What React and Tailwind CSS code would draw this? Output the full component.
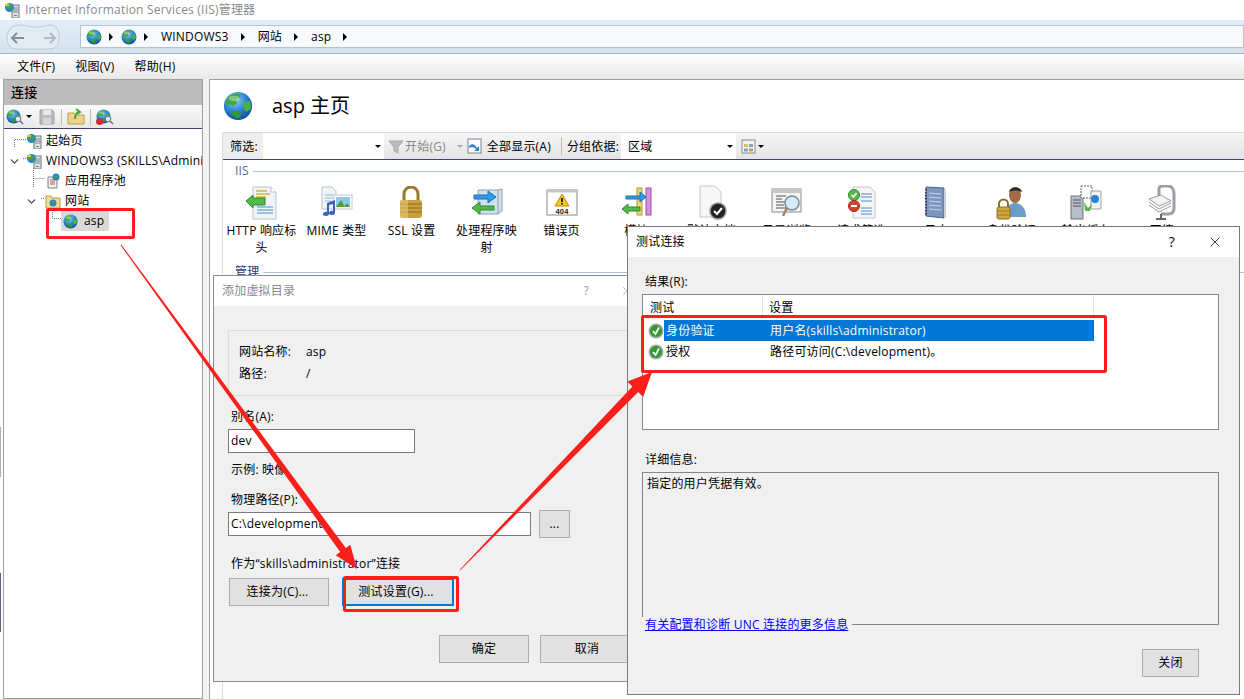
import { ChevronDown, X } from 'lucide-react'

const font = { fontFamily: '"Open Sans", "Noto Sans CJK SC", sans-serif' }

function Globe({ size = 16 }) {
  return (
    <svg width={size} height={size} viewBox="0 0 32 32" className="shrink-0">
      <defs>
        <radialGradient id="globeSea" cx="0.4" cy="0.3" r="0.8">
          <stop offset="0" stopColor="#8fd0f5" />
          <stop offset="0.5" stopColor="#2a84cf" />
          <stop offset="1" stopColor="#0c3f8e" />
        </radialGradient>
      </defs>
      <circle cx="16" cy="16" r="15" fill="url(#globeSea)" />
      <path d="M7 6c4-3 9-4 12-2l-1 4-4 1 1 4-4 3-3-2-5 1c-1-3 1-7 4-9z" fill="#3fa83a" />
      <path d="M21 13l7-3c2 3 2 7 1 10l-4 2-3-3z" fill="#4bb043" />
      <path d="M8 22l8-1 4 3-3 5c-4 0-7-3-9-7z" fill="#2f9a38" />
      <ellipse cx="12" cy="8" rx="6" ry="3" fill="#ffffff" opacity="0.35" />
    </svg>
  )
}

function Server({ size = 16 }) {
  return (
    <svg width={size} height={size} viewBox="0 0 16 16" className="shrink-0">
      <rect x="8" y="3" width="7" height="13" fill="#dfe3e8" stroke="#6b7380" />
      <path d="M9 6h5M9 8h5M9 10h5" stroke="#7a8290" />
      <path d="M10 13.500h3" stroke="#43a83c" />
      <circle cx="5.500" cy="5.500" r="4.500" fill="#2a84cf" />
      <path d="M3 3l4-1 1 3-3 2-3-1zM6 8l3-2v3z" fill="#43a83c" />
      <path d="M1 2h4v2H1z" fill="#f2c230" />
    </svg>
  )
}

function Caret({ className = '' }) {
  return <span className={`inline-block w-0 h-0 border-x-[3px] border-x-transparent border-t-[3px] border-t-black ${className}`} />
}

function CrumbArrow({ className }) {
  return <span className={`w-0 h-0 border-y-[4px] border-y-transparent border-l-[4px] border-l-black ${className}`} />
}

function Magnifier() {
  return (
    <svg width="10" height="10" viewBox="0 0 10 10" className="absolute right-[-3px] bottom-[-1px]">
      <circle cx="4" cy="4" r="2.800" fill="#dcecf6" stroke="#6a7480" />
      <path d="M6 6l3 3" stroke="#6a7480" strokeWidth="1.600" />
    </svg>
  )
}

function HttpIcon() {
  return (
    <svg width="34" height="34" viewBox="0 0 34 34">
      <path d="M8 1h18l5 5v27H8z" fill="#eef5f8" stroke="#b8c4cc" />
      <path d="M26 1v5h5" fill="#fff" stroke="#b8c4cc" />
      <path d="M11 5h11M11 8h14M11 11h10" stroke="#d8b03c" strokeWidth="1.600" />
      <path d="M12 21h16M12 24h16M12 27h16" stroke="#4a8ac8" />
      <path d="M1 15l7-6v3h12v7H8v3z" fill="#55b848" stroke="#2f8a30" />
    </svg>
  )
}

function MimeIcon() {
  return (
    <svg width="34" height="34" viewBox="0 0 34 34">
      <path d="M2 1h10l4 4v18H2z" fill="#f2f5f8" stroke="#b8c0c8" />
      <path d="M5 9h8M5 12h8M5 15h6" stroke="#8fb0d0" />
      <rect x="14" y="9" width="18" height="14" fill="#fff" stroke="#c0c8d0" />
      <rect x="16" y="11" width="14" height="10" fill="#8fc8ee" />
      <path d="M16 21l5-7 4 7zM24 21l3-4 3 4z" fill="#5a9a30" />
      <path d="M7 17l8-3v13a3 2 0 1 1-2-2v-7l-4 1v9a3 2 0 1 1-2-2z" fill="#3a62b8" />
    </svg>
  )
}

function LockIcon() {
  return (
    <svg width="30" height="34" viewBox="0 0 30 34">
      <path d="M7 15V8a7 7 0 0 1 14 0v7" fill="none" stroke="#9a7a28" strokeWidth="3" />
      <rect x="3" y="14" width="22" height="18" rx="3" fill="#c9a040" />
      <path d="M3 18h22M3 22h22M3 26h22" stroke="#8e6c1e" />
      <rect x="3" y="14" width="8" height="18" fill="#e6c878" opacity="0.6" />
    </svg>
  )
}

function HandlerIcon() {
  return (
    <svg width="34" height="34" viewBox="0 0 34 34">
      <path d="M8 4h20l4-1v22l-4 3H8z" fill="#cfe0ee" stroke="#8fa0b0" />
      <path d="M28 4v24" stroke="#8fa0b0" />
      <path d="M4 9h14V5l8 6-8 6v-4H4z" fill="#2f9ae0" stroke="#1a70b0" />
      <path d="M24 20H10v-4l-8 6 8 6v-4h14z" fill="#55b848" stroke="#2f8a30" />
    </svg>
  )
}

function ErrorIcon() {
  return (
    <svg width="32" height="28" viewBox="0 0 32 28">
      <rect x="1" y="1" width="30" height="25" fill="#fff" stroke="#8a8a8a" />
      <rect x="1" y="1" width="30" height="2.500" fill="#c8c8c8" />
      <path d="M16 5l7 12H9z" fill="#f4c820" stroke="#b8900c" />
      <path d="M16 9v4M16 14v1.500" stroke="#000" strokeWidth="1.600" />
      <text x="16" y="24.500" fontSize="7.500" textAnchor="middle" fill="#222" fontFamily="Liberation Sans, sans-serif" fontWeight="700">404</text>
    </svg>
  )
}

function ModuleIcon() {
  return (
    <svg width="34" height="34" viewBox="0 0 34 34">
      <rect x="17" y="2" width="5" height="27" fill="#f0d870" stroke="#b09a30" />
      <rect x="26" y="2" width="5" height="27" fill="#d890dc" stroke="#9a50a8" />
      <path d="M6 10h14V6l6 5-6 5v-3H6z" fill="#2f9ae0" stroke="#1a70b0" />
      <path d="M20 21H8v-3l-6 5 6 5v-3h12z" fill="#55b848" stroke="#2f8a30" />
    </svg>
  )
}

function DocCheckIcon() {
  return (
    <svg width="34" height="36" viewBox="0 0 34 36">
      <path d="M5 1h15l6 6v25H5z" fill="#f7f7f7" stroke="#c8c8c8" />
      <circle cx="23" cy="26" r="8" fill="#222" stroke="#999" strokeWidth="1.500" />
      <path d="M19 26l3 3 5-6" fill="none" stroke="#fff" strokeWidth="2" />
    </svg>
  )
}

function BrowseIcon() {
  return (
    <svg width="34" height="34" viewBox="0 0 34 34">
      <rect x="2" y="3" width="29" height="23" fill="#f4f4f4" stroke="#8a8a8a" />
      <rect x="2" y="3" width="29" height="4" fill="#c8c8c8" />
      <path d="M6 10h10M6 13h6M6 16h10M6 19h8M6 22h10" stroke="#555" />
      <circle cx="22" cy="17" r="7" fill="#d4ebf8" stroke="#7a8a98" strokeWidth="1.500" />
      <path d="M17 22l-4 8" stroke="#9a8a60" strokeWidth="2.500" />
    </svg>
  )
}

function FilterIcon() {
  return (
    <svg width="32" height="34" viewBox="0 0 32 34">
      <path d="M7 1h17l5 5v26H7z" fill="#f5f5f5" stroke="#c8c8c8" />
      <path d="M15 8h11M15 11h11M15 15h11M15 22h11M15 25h11M15 28h11" stroke="#4a8ac8" />
      <circle cx="8" cy="9" r="5.500" fill="#55b848" stroke="#2f8a30" />
      <path d="M5.500 9l2 2 3-4" stroke="#fff" fill="none" strokeWidth="1.500" />
      <circle cx="8" cy="20" r="5.500" fill="#d84030" stroke="#a02820" />
      <path d="M5 20h6" stroke="#fff" strokeWidth="2" />
    </svg>
  )
}

function LogIcon() {
  return (
    <svg width="30" height="36" viewBox="0 0 30 36">
      <path d="M4 2l18 1v30L4 31z" fill="#7c96bf" stroke="#4d6488" />
      <path d="M7 8l12 1M7 12l12 1M7 16l12 1M7 20l12 1M7 24l12 1" stroke="#c9d5e6" />
      <path d="M4 4v26" stroke="#33435c" strokeWidth="2" strokeDasharray="1.500 1.500" />
      <path d="M22 4l2 1v28h-2z" fill="#c8d0dc" />
    </svg>
  )
}

function AuthIcon() {
  return (
    <svg width="34" height="36" viewBox="0 0 34 36">
      <path d="M11 32c0-9 3-14 9-14s11 5 11 14z" fill="#6a9cc8" />
      <ellipse cx="20" cy="10" rx="6" ry="8" fill="#a06c44" />
      <path d="M14 7c1-6 12-6 13 0-4-2-9-2-13 0z" fill="#2c2a28" />
      <path d="M4 23v-4a4.500 4.500 0 0 1 9 0v4" fill="none" stroke="#8a7028" strokeWidth="2" />
      <rect x="2" y="22" width="13" height="12" rx="2" fill="#d0a840" stroke="#8a7028" />
      <path d="M2 26h13M2 30h13" stroke="#9a7a28" />
    </svg>
  )
}

function CacheIcon() {
  return (
    <svg width="34" height="36" viewBox="0 0 34 36">
      <rect x="1" y="11" width="12" height="23" fill="#b8bec6" stroke="#6b7380" />
      <path d="M3 15h8M3 18h8M3 21h8" stroke="#555" />
      <path d="M11 1h11v12H11z" fill="#fff" stroke="#666" strokeDasharray="2 1" />
      <path d="M21 6h10v18H21z" fill="#eef2f5" stroke="#9aa4ae" />
      <circle cx="25" cy="14" r="4" fill="#2a84cf" />
      <path d="M14 17l4 6 4-4-2 7h-5z" fill="#55b848" />
    </svg>
  )
}

function CompressIcon() {
  return (
    <svg width="30" height="36" viewBox="0 0 30 36">
      <path d="M12 11V4a3 3 0 0 1 3-3h6c4 0 6 4 6 8v14c0 4-2 6-6 6h-7" fill="none" stroke="#9aa0a8" strokeWidth="3" />
      <path d="M2 14l12-4 10 6-12 5z" fill="#f4f4f4" stroke="#999" />
      <path d="M2 17l10 7 12-6M2 20l10 7 12-6" fill="none" stroke="#999" />
      <path d="M14 29v5M9 34h10" stroke="#666" strokeWidth="2" />
    </svg>
  )
}

const features = [
  { label: 'HTTP 响应标头', icon: <HttpIcon /> },
  { label: 'MIME 类型', icon: <MimeIcon /> },
  { label: 'SSL 设置', icon: <LockIcon /> },
  { label: '处理程序映射', icon: <HandlerIcon /> },
  { label: '错误页', icon: <ErrorIcon /> },
  { label: '模块', icon: <ModuleIcon /> },
  { label: '默认文档', icon: <DocCheckIcon /> },
  { label: '目录浏览', icon: <BrowseIcon /> },
  { label: '请求筛选', icon: <FilterIcon /> },
  { label: '日志', icon: <LogIcon /> },
  { label: '身份验证', icon: <AuthIcon /> },
  { label: '输出缓存', icon: <CacheIcon /> },
  { label: '压缩', icon: <CompressIcon /> },
]

function TreeRow({ indent, chevron, icon, children }) {
  return (
    <div className={`flex items-center h-[20px] ${indent}`}>
      {chevron && <ChevronDown size={13} strokeWidth={2.2} className="text-[#444] mr-[2px] shrink-0" />}
      {icon}
      <span className="ml-[4px] text-black whitespace-nowrap">{children}</span>
    </div>
  )
}

function Sidebar() {
  return (
    <div className="w-[200px] ml-[3px] shrink-0 border border-[#a0a0a0] flex flex-col overflow-hidden bg-white">
      <div className="h-[25px] bg-[#bcbcbc] flex items-center pl-[7px] text-[13px] font-medium">连接</div>
      <div className="h-[24px] flex items-center pl-[2px] gap-[3px] bg-gradient-to-b from-[#fafafa] to-[#e8e8e8] border-b border-[#3d4270]">
        <span className="relative flex">
          <Globe size={15} />
          <Magnifier />
        </span>
        <Caret className="ml-[2px]" />
        <svg width="18" height="18" viewBox="0 0 18 18" className="ml-[3px]"><path d="M2 2h12l2 2v12H2z" fill="#b8bcc0" stroke="#9a9ea4" /><rect x="5" y="2" width="8" height="5" fill="#e8e8e8" /><rect x="5" y="10" width="8" height="6" fill="#d8d8d8" /></svg>
        <span className="w-px h-[16px] bg-[#c4c0a8] mx-[2px]" />
        <svg width="18" height="18" viewBox="0 0 18 18"><path d="M1 5h6l2 2h8v9H1z" fill="#f0d48a" stroke="#b89a48" /><path d="M8 11c0-4 1-6 4-7M9 1l4 3-4 2" stroke="#4aa83a" strokeWidth="2" fill="none" /></svg>
        <span className="w-px h-[16px] bg-[#c4c0a8] mx-[2px]" />
        <span className="relative flex">
          <Globe size={15} />
          <span className="absolute left-0 bottom-[-1px] w-[7px] h-[7px] rounded-full bg-[#d03030]" />
          <Magnifier />
        </span>
      </div>
      <div className="relative text-[12px] flex-1" style={font}>
        <svg width="70" height="100" className="absolute left-0 top-0" fill="none" stroke="#777" strokeDasharray="1 1">
          <path d="M10.500 18V10.500H22M19 29.500H22M29.500 39V59M29.500 49.500H41M37 69.500H41M48.500 79V89.500H58" />
        </svg>
        <div className="relative pt-[2px]">
          <TreeRow indent="pl-[22px]" icon={<Server size={16} />}>起始页</TreeRow>
          <TreeRow indent="pl-[4px]" chevron icon={<span className="ml-[3px] flex"><Server size={16} /></span>}>WINDOWS3 (SKILLS\Administrator)</TreeRow>
          <TreeRow indent="pl-[41px]" icon={<svg width="16" height="16" viewBox="0 0 16 16"><path d="M3 4h9v11H3z" fill="#eef0f2" stroke="#7a8290" /><path d="M5 7h5M5 9h5M5 11h5" stroke="#c06030" /><circle cx="11" cy="4" r="3.500" fill="#2a84cf" /><path d="M9 3l3-1 1 2-3 1z" fill="#43a83c" /></svg>}>应用程序池</TreeRow>
          <TreeRow indent="pl-[21px]" chevron icon={<span className="ml-[5px] flex"><svg width="16" height="16" viewBox="0 0 16 16"><path d="M1 3h5l1 2h8v10H1z" fill="#f3dc9a" stroke="#b89a48" /><circle cx="8" cy="10" r="3.500" fill="#2a84cf" /><path d="M6 9l3-1 1 2-3 1z" fill="#43a83c" /></svg></span>}>网站</TreeRow>
          <div className="flex items-center h-[20px] pl-[57px]">
            <div className="flex items-center h-[20px] w-[48px] pl-[2px] bg-[#d9d9d9]">
              <Globe size={15} />
              <span className="ml-[6px]">asp</span>
            </div>
          </div>
        </div>
      </div>
    </div>
  )
}

function FilterBar() {
  return (
    <div className="h-[28px] flex items-center border-t border-[#dcdcdc] border-b border-b-[#3d4270] bg-gradient-to-b from-[#f6f6f6] to-[#e4e4e4] text-[12px]">
      <span className="w-[40px] pl-[7px] pt-[2px] h-full flex items-center bg-[#eeeeee]">筛选:</span>
      <div className="w-[121px] h-full bg-white flex items-center justify-end pr-[3px]"><Caret /></div>
      <svg width="16" height="16" viewBox="0 0 16 16" className="ml-[4px]"><path d="M1 3h14L10 9v6l-4-2V9z" fill="#bcbcbc" stroke="#a8a8a8" /></svg>
      <span className="ml-[1px] mt-[2px] text-[#888]">开始(G)</span>
      <span className="ml-[11px] w-0 h-0 border-x-[3px] border-x-transparent border-t-[3px] border-t-[#aaa]" />
      <svg width="16" height="16" viewBox="0 0 16 16" className="ml-[4px]"><rect x="1" y="1" width="13" height="14" fill="#fff" stroke="#7a8290" /><path d="M2 8c3-3 6-2 8 2l2-2v5H7l2-2c-2-2-4-3-7-1z" fill="#2a84cf" /></svg>
      <span className="ml-[4px] mt-[2px]">全部显示(A)</span>
      <span className="ml-[10px] w-px h-[18px] bg-[#c4c0a8]" />
      <span className="ml-[5px] mt-[2px]">分组依据:</span>
      <div className="ml-[2px] w-[115px] h-full bg-white flex items-center justify-between pl-[7px] pr-[3px]"><span className="mt-[2px]">区域</span><Caret /></div>
      <svg width="15" height="15" viewBox="0 0 15 15" className="ml-[5px]"><rect x="1" y="1" width="13" height="13" fill="#f4f4f4" stroke="#8a8a8a" /><path d="M3 5h4v3H3z" fill="#e0c060" /><path d="M8 5h4v3H8z" fill="#80a0d0" /><path d="M3 9.500h4v3H3z" fill="#80a0d0" /><path d="M8 9.500h4v3H8z" fill="#d09060" /></svg>
      <Caret className="ml-[2px]" />
    </div>
  )
}

function GroupTitle({ children, className }) {
  return (
    <div className="flex items-center h-[16px] pl-[12px]">
      <span className={`text-[12px] ${className}`}>{children}</span>
      <span className="ml-[4px] flex-1 h-px bg-[#b4bfdc]" />
    </div>
  )
}

function MainPane() {
  return (
    <div className="flex-1 ml-[6px] border-t border-l border-[#a0a0a0] bg-white flex flex-col min-w-0">
      <div className="h-[52px] flex items-center pl-[13px] shrink-0">
        <Globe size={30} />
        <span className="ml-[19px] text-[20px] leading-[26px] tracking-normal">asp 主页</span>
      </div>
      <div className="ml-[12px] flex-1 border-l border-[#dcdcdc] flex flex-col">
        <FilterBar />
        <div className="pt-[3px]">
          <GroupTitle className="text-[#5b6a9c]">IIS</GroupTitle>
          <div className="flex pl-[1px] pt-[6px] h-[85px]">
            {features.map(f => (
              <div key={f.label} className="w-[75px] shrink-0 flex flex-col items-center text-[12px] leading-[17px] text-center">
                <div className="h-[36px] flex items-center justify-center">{f.icon}</div>
                <div className="mt-[1px] w-[71px]">{f.label}</div>
              </div>
            ))}
          </div>
          <GroupTitle className="text-[#1f3a7a]">管理</GroupTitle>
        </div>
      </div>
    </div>
  )
}

function WinButton({ children, className = '' }) {
  return <button className={`h-[28px] flex items-center justify-center bg-[#e1e1e1] border text-[12px] ${className}`}>{children}</button>
}

function AddVirtualDirDialog() {
  return (
    <div className="absolute left-[213px] top-[275px] w-[430px] h-[407px] border border-[#8c8c8c] bg-[#f0f0f0] text-[12px] leading-[16px]">
      <div className="h-[30px] bg-white flex items-center pl-[8px] pr-[8px] text-[#8a8a8a]">
        <span className="flex-1">添加虚拟目录</span>
        <span className="mr-[31px] text-[#999]">?</span>
        <X size={14} strokeWidth={1.200} className="text-[#999]" />
      </div>
      <div className="pl-[14px]">
        <div className="mt-[24px] h-[66px] border border-[#dcdcdc] pl-[10px] pt-[10px]">
          <div className="flex h-[22px] items-center"><span className="w-[67px]">网站名称:</span><span>asp</span></div>
          <div className="flex h-[22px] items-center"><span className="w-[67px]">路径:</span><span>/</span></div>
        </div>
        <div className="mt-[13px] pl-[3px]">别名(A):</div>
        <div className="mt-[4px] w-[187px] h-[24px] border border-[#7a7a7a] bg-white pl-[2px] flex items-center">dev</div>
        <div className="mt-[9px] pl-[3px]">示例: 映像</div>
        <div className="mt-[14px] pl-[3px]">物理路径(P):</div>
        <div className="mt-[2px] flex items-center h-[28px]">
          <div className="w-[303px] h-[24px] border border-[#7a7a7a] bg-white pl-[2px] flex items-center">C:\development</div>
          <WinButton className="ml-[8px] w-[31px] border-[#adadad]">...</WinButton>
        </div>
        <div className="mt-[18px] pl-[3px]">作为“skills\administrator”连接</div>
        <div className="mt-[6px] flex items-center pl-[1px]">
          <WinButton className="w-[100px] border-[#adadad] pr-[3px]">连接为(C)...</WinButton>
          <WinButton className="ml-[13px] w-[112px] border-2 border-[#0078d7] pr-[4px]">测试设置(G)...</WinButton>
        </div>
        <div className="mt-[29px] flex pl-[211px] gap-[11px]">
          <WinButton className="w-[90px] border-[#adadad]">确定</WinButton>
          <WinButton className="w-[94px] border-[#adadad]">取消</WinButton>
        </div>
      </div>
    </div>
  )
}

const testRows = [
  { name: '身份验证', value: '用户名(skills\\administrator)', selected: true },
  { name: '授权', value: '路径可访问(C:\\development)。', selected: false },
]

function CheckBadge() {
  return (
    <svg width="16" height="16" viewBox="0 0 16 16" className="shrink-0">
      <circle cx="8" cy="8" r="7.500" fill="#a8a8a8" />
      <circle cx="8" cy="8" r="6" fill="#2f9a30" />
      <path d="M5 8l2.500 3L11 4.500" fill="none" stroke="#fff" strokeWidth="1.800" />
    </svg>
  )
}

function TestDialog() {
  return (
    <div className="absolute left-[627px] top-[226px] w-[613px] h-[469px] border border-[#7a7a7a] bg-[#f0f0f0] text-[12px] leading-[16px]">
      <div className="h-[30px] bg-white flex items-center pl-[8px] pr-[16px]">
        <span className="flex-1">测试连接</span>
        <span className="mr-[32px] text-[14px]">?</span>
        <X size={16} strokeWidth={1.100} />
      </div>
      <div className="pl-[14px] pr-[20px]">
        <div className="mt-[17px] pl-[3px]">结果(R):</div>
        <div className="mt-[4px] h-[136px] border border-[#828790] bg-white">
          <div className="flex h-[24px] items-center">
            <span className="w-[120px] pl-[7px] pt-[2px] h-full flex items-center border-r border-[#e5e5e5]">测试</span>
            <span className="w-[331px] pl-[6px] pt-[2px] h-full flex items-center border-r border-[#e5e5e5]">设置</span>
          </div>
          <div className="pt-[1px]">
            {testRows.map(r => (
              <div key={r.name} className="flex items-center h-[21px] pl-[5px]">
                <CheckBadge />
                <div className={`flex items-center h-full w-[430px] ${r.selected ? 'bg-[#0078d7] text-white' : ''}`}>
                  <span className="w-[100px] pl-[2px]">{r.name}</span>
                  <span className="pl-[6px]">{r.value}</span>
                </div>
              </div>
            ))}
          </div>
        </div>
        <div className="mt-[22px] pl-[3px]">详细信息:</div>
        <div className="mt-[4px] h-[153px] border border-[#828790] pl-[4px] pt-[3px]">指定的用户凭据有效。</div>
        <div className="-mt-[8px] relative flex">
          <a className="bg-[#f0f0f0] pl-[3px] pr-[4px] text-[#0000ff] underline whitespace-nowrap">有关配置和诊断 UNC 连接的更多信息</a>
        </div>
        <div className="mt-[16px] flex justify-end pr-[20px]">
          <WinButton className="w-[57px] border-[#adadad]">关闭</WinButton>
        </div>
      </div>
    </div>
  )
}

function Annotations() {
  return (
    <svg width="1244" height="699" className="absolute left-0 top-0 pointer-events-none">
      <rect x="47.500" y="209.500" width="86" height="28" rx="1" fill="none" stroke="#fb1f1c" strokeWidth="3" />
      <rect x="344.500" y="577.500" width="113" height="33" rx="1" fill="none" stroke="#fb1f1c" strokeWidth="3" />
      <rect x="642.500" y="316.500" width="463" height="55" rx="1" fill="none" stroke="#fb1f1c" strokeWidth="3" />
      <polygon points="121.400,244.700 120.600,245.300 340.200,552 335.700,555.300 357,569 350.300,544.700 345.800,548" fill="#fb1f1c" />
      <polygon points="460,570.500 459.500,570 632.400,386.400 627.400,381.500 652,372 643.200,396.900 638.200,392" fill="#fb1f1c" />
    </svg>
  )
}

export default function App() {
  return (
    <div className="relative w-[1244px] h-[699px] overflow-hidden bg-white flex flex-col text-black tracking-[0.2px]" style={font}>
      <div className="h-[20px] flex items-center pl-[4px] text-[12px] text-[#8a8a8a] shrink-0">
        <Server size={16} />
        <span className="ml-[5px]">Internet Information Services (IIS)管理器</span>
      </div>
      <div className="h-[34px] shrink-0 flex items-center bg-gradient-to-b from-[#e4eef7] to-[#d4e2ef] border-b border-[#a8b6c4] pl-[6px]">
        <svg width="54" height="26" viewBox="0 0 54 26">
          <path d="M12 1c8 0 10 2 18 2s10-2 14-2c6 0 9 5 9 12s-3 12-9 12H10C4 25 1 20 1 14S5 1 12 1z" fill="#e2ecf5" stroke="#c2ccd6" />
          <path d="M18 14H6M11 9l-5 5 5 5" fill="none" stroke="#868f98" strokeWidth="2" />
          <path d="M38 14h11M44 9l5 5-5 5" fill="none" stroke="#b0b8c0" strokeWidth="2" />
        </svg>
        <div className="ml-[20px] flex-1 h-[23px] border border-[#b4c4d6] bg-[#f8fbfd] flex items-center pl-[5px] text-[12px]">
          <Globe size={16} />
          <CrumbArrow className="ml-[7px] mr-[8px]" />
          <Globe size={16} />
          <CrumbArrow className="ml-[7px] mr-[13px]" />
          <span>WINDOWS3</span>
          <CrumbArrow className="ml-[12px] mr-[13px]" />
          <span>网站</span>
          <CrumbArrow className="ml-[12px] mr-[13px]" />
          <span>asp</span>
          <CrumbArrow className="ml-[12px]" />
        </div>
      </div>
      <div className="h-[25px] shrink-0 flex items-center pl-[17px] gap-[20px] text-[12px] bg-gradient-to-b from-[#ffffff] to-[#e8e8e8]">
        <span>文件(F)</span><span>视图(V)</span><span>帮助(H)</span>
      </div>
      <div className="flex-1 flex min-h-0 bg-[linear-gradient(to_right,#ffffff_3px,#f3f3f3_3px)]">
        <Sidebar />
        <MainPane />
      </div>
      <span className="absolute left-0 top-[427px] w-px h-[50px] bg-[#b0b0b0]" />
      <span className="absolute left-0 top-[573px] w-px h-[59px] bg-[#5a6080]" />
      <AddVirtualDirDialog />
      <TestDialog />
      <Annotations />
    </div>
  )
}
